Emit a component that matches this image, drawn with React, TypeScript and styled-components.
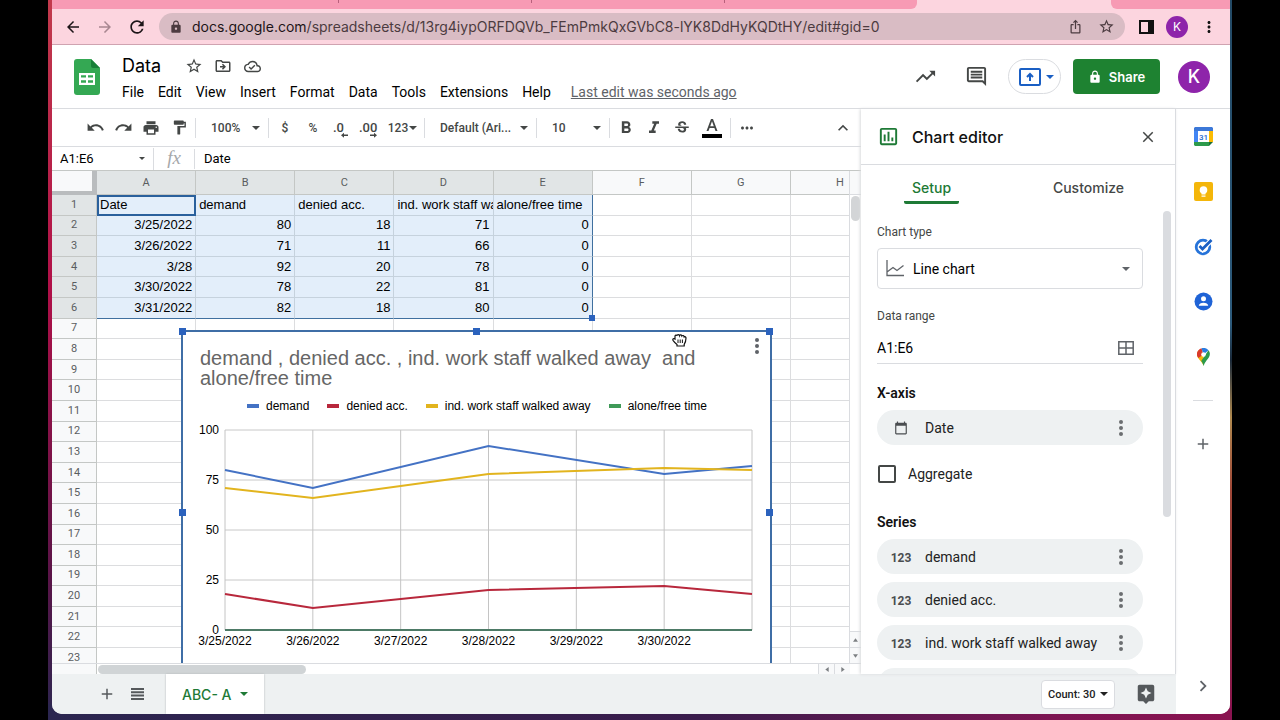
import React from 'react';
import styled, { createGlobalStyle, css } from 'styled-components';
import {
  MdArrowBack, MdArrowForward, MdAssistant, MdAdd, MdCalendarToday, MdChevronRight, MdClose,
  MdExpandLess, MdFormatBold, MdFormatItalic, MdFormatPaint, MdIosShare, MdLock, MdMoreHoriz, MdMoreVert,
  MdOutlineAssessment, MdOutlineCloudDone, MdOutlineComment, MdOutlineDriveFileMove,
  MdPrint, MdRedo, MdRefresh, MdStarBorder, MdStrikethroughS, MdTrendingUp, MdUndo,
} from 'react-icons/md';

const ui = "Roboto, 'Liberation Sans', sans-serif";
const display = "Inter, Roboto, sans-serif";
const sheetFont = "'Liberation Sans', Arial, sans-serif";
const line = '#dadce0';
const ink = '#444746';

const GlobalStyle = createGlobalStyle`
  * { box-sizing: border-box; }
  body { margin: 0; background: #000; font-family: ${ui}; color: #111; }
  button, input, select { font: inherit; color: inherit; margin: 0; padding: 0; border: 0; background: none; }
  button { cursor: pointer; }
  svg { display: block; flex: none; }
`;

/* ---------- frame ---------- */
const Stage = styled.div`
  height: 100vh;
  padding: 0 48px;
  background: #000;
`;
const Desktop = styled.div`
  height: 100%;
  padding: 0 2px 6px 4px;
  background:
    linear-gradient(90deg, #2b2650 0%, #3a1c4c 55%, #7d1552 85%, #8a1350 100%) bottom / 100% 16px no-repeat,
    linear-gradient(180deg, #234a66 0%, #2d5b7c 45%, #1b2a3a 50%, #b08a50 58%, #a04838 68%, #8c2a3c 85%, #8a1350 100%) right / 6px 100% no-repeat,
    linear-gradient(180deg, #c23a4c 0%, #b01048 40%, #5a1448 80%, #2b2650 100%);
`;
const Window = styled.div`
  display: flex;
  flex-direction: column;
  height: 100%;
  overflow: hidden;
  background: #fff;
  border-radius: 0 0 10px 10px;
`;

/* ---------- browser chrome ---------- */
const TabStrip = styled.div`
  display: flex;
  flex: none;
  height: 9px;
  background: #fcd5df;
`;
const InactiveTabs = styled.div<{ $trailing?: boolean }>`
  flex: ${p => (p.$trailing ? '0 0 119px' : '1')};
  display: flex;
  justify-content: flex-end;
  gap: 192px;
  padding-right: ${p => (p.$trailing ? 0 : 192)}px;
  background: #f79ab4;
  border-radius: ${p => (p.$trailing ? '0 0 0 6px' : '0 0 6px 0')};
`;
const TabDivider = styled.i`
  width: 1px;
  height: 3px;
  background: #b8607c;
`;
const ActiveTab = styled.div`
  width: 194px;
`;
const AddressRow = styled.div`
  display: flex;
  align-items: center;
  flex: none;
  height: 36px;
  padding: 0 12px 0 11px;
  background: #fcd5df;
  border-bottom: 1px solid #cfa3b0;
`;
const NavButton = styled.button<{ $dim?: boolean }>`
  display: grid;
  place-items: center;
  width: 20px;
  height: 24px;
  margin-right: 12px;
  color: ${p => (p.$dim ? '#a88791' : '#1d1518')};
`;
const UrlPill = styled.div`
  display: flex;
  align-items: center;
  flex: 1;
  min-width: 0;
  height: 27px;
  padding: 0 11px 0 10px;
  gap: 9px;
  border-radius: 14px;
  background: #d9bcc4;
  color: #4c3b40;
`;
const Url = styled.div`
  flex: 1;
  min-width: 0;
  overflow: hidden;
  white-space: nowrap;
  font: 14px/20px ${display};
  color: #4c3b40;
  b { font-weight: 400; color: #1d1518; }
`;
const PillButton = styled.button`
  display: grid;
  place-items: center;
  width: 16px;
  height: 20px;
  margin-left: 6px;
`;
const BrowserTools = styled.div`
  display: flex;
  align-items: center;
  gap: 12px;
  margin-left: 14px;
`;
const Avatar = styled.button<{ $size: number }>`
  flex: none;
  width: ${p => p.$size}px;
  height: ${p => p.$size}px;
  border-radius: 50%;
  background: #8e24aa;
  color: #fff;
  font: ${p => (p.$size > 24 ? '500 18px' : '12px')} ${display};
`;

/* ---------- document header ---------- */
const DocHeader = styled.header`
  display: flex;
  align-items: center;
  flex: none;
  height: 64px;
  padding: 0 20px 0 22px;
  border-bottom: 1px solid ${line};
`;
const TitleBlock = styled.div`
  flex: 1;
  min-width: 0;
  margin-left: 22px;
  padding-top: 5px;
`;
const TitleRow = styled.div`
  display: flex;
  align-items: center;
  height: 26px;
  color: ${ink};
`;
const DocTitle = styled.h1`
  margin: 0 24px 0 0;
  font: 18px/26px ${display};
  color: #000;
`;
const TitleIcon = styled.button`
  display: grid;
  place-items: center;
  width: 18px;
  height: 20px;
  margin-right: 11px;
`;
const MenuRow = styled.nav`
  display: flex;
  align-items: center;
  gap: 14px;
  height: 26px;
  font-size: 14px;
  line-height: 20px;
  white-space: nowrap;
  color: #000;
`;
const EditLink = styled.a`
  margin-left: 6px;
  color: #5f6368;
`;
const HeaderIcon = styled.button<{ $gap: number }>`
  color: ${ink};
  margin-right: ${p => p.$gap}px;
`;
const PresentButton = styled.button`
  display: flex;
  align-items: center;
  justify-content: center;
  gap: 5px;
  width: 53px;
  height: 35px;
  margin-right: 12px;
  padding-left: 4px;
  border: 1px solid ${line};
  border-radius: 18px;
  color: #1a5fc4;
`;
const ShareButton = styled.button`
  display: flex;
  align-items: center;
  justify-content: center;
  gap: 7px;
  width: 87px;
  height: 35px;
  margin-right: 18px;
  border-radius: 4px;
  background: #1e8231;
  color: #fff;
  font: 600 13px ${display};
`;

/* ---------- workspace ---------- */
const Workspace = styled.div`
  display: flex;
  flex: 1;
  min-height: 0;
`;
const Main = styled.div`
  display: flex;
  flex-direction: column;
  flex: 1;
  min-width: 0;
`;
const Upper = styled.div`
  display: flex;
  flex: 1;
  min-height: 0;
`;
const SheetPane = styled.section`
  display: flex;
  flex-direction: column;
  flex: 1;
  min-width: 0;
`;
const Toolbar = styled.div`
  display: flex;
  align-items: center;
  flex: none;
  height: 38px;
  padding: 0 4px 0 29px;
  border-bottom: 1px solid ${line};
  color: ${ink};
  font-size: 12px;
  font-weight: 500;
`;
const ToolButton = styled.button<{ $w?: number; $end?: boolean }>`
  display: flex;
  align-items: center;
  justify-content: center;
  gap: 1px;
  width: ${p => p.$w ?? 28}px;
  height: 28px;
  ${p => p.$end && css`margin-left: auto;`}
`;
const ToolDivider = styled.i`
  flex: none;
  width: 1px;
  height: 20px;
  margin: 0 2px;
  background: ${line};
`;
const ToolSelect = styled.label<{ $w: number }>`
  display: flex;
  align-items: center;
  width: ${p => p.$w}px;
  padding: 0 6px 0 13px;
`;
const Select = styled.select`
  flex: 1;
  min-width: 0;
  appearance: none;
  outline: 0;
`;
const FormulaRow = styled.div`
  display: flex;
  align-items: center;
  flex: none;
  height: 24px;
  border-bottom: 1px solid #c4c7c5;
`;
const NameBox = styled.label`
  display: flex;
  align-items: center;
  width: 102px;
  height: 22px;
  padding: 0 8px;
  border-right: 1px solid ${line};
  color: ${ink};
`;
const TextInput = styled.input<{ $size?: number }>`
  flex: 1;
  min-width: 0;
  width: 40px;
  outline: 0;
  color: #000;
  font-size: ${p => p.$size ?? 13}px;
`;
const FxMark = styled.span`
  width: 41px;
  height: 20px;
  border-right: 1px solid ${line};
  text-align: center;
  font: italic 19px/18px 'Liberation Serif', serif;
  color: #a6a8aa;
`;
const FormulaField = styled.label`
  display: flex;
  flex: 1;
  padding: 0 9px;
`;

/* ---------- grid ---------- */
const GridRow = styled.div`
  display: flex;
  flex: 1;
  min-height: 0;
`;
const GridView = styled.div`
  position: relative;
  flex: 1;
  min-width: 0;
  overflow: hidden;
`;
const Grid = styled.table`
  width: 838px;
  height: 498px;
  table-layout: fixed;
  border-collapse: separate;
  border-spacing: 0;
  font: 13px/18px ${sheetFont};
`;
const HeadCol = styled.col`
  width: 45px;
`;
const HeadRow = styled.tr`
  height: 24px;
`;
const Corner = styled.td`
  padding: 0;
  border: solid #b9bcbe;
  border-width: 0 5px 4px 0;
  background: #f8f9fa;
`;
const HeadCell = styled.th<{ $on?: boolean }>`
  padding: 0;
  border-right: 1px solid #c4c7c5;
  border-bottom: 1px solid #c4c7c5;
  background: ${p => (p.$on ? '#e1e5e6' : '#f8f9fa')};
  color: #5a5d60;
  font: 11px/18px ${ui};
`;
const Cell = styled.td<{ $on?: boolean; $left?: boolean; $edgeR?: boolean; $edgeB?: boolean; $active?: boolean }>`
  position: relative;
  padding: 0 3px;
  overflow: hidden;
  white-space: nowrap;
  text-align: ${p => (p.$left ? 'left' : 'right')};
  color: #000;
  background: ${p => (p.$on ? '#e3eefa' : '#fff')};
  border-right: 1px solid ${p => (p.$edgeR ? '#40709f' : p.$on ? '#c6d2dd' : '#dcdddf')};
  border-bottom: 1px solid ${p => (p.$edgeB ? '#40709f' : p.$on ? '#c6d2dd' : '#dcdddf')};
  ${p => p.$active && css`outline: 2px solid #2a609c; outline-offset: -2px;`}
  ${p => p.$edgeR && p.$edgeB && css`overflow: visible; z-index: 1;`}
`;
const FillHandle = styled.i`
  position: absolute;
  right: -3px;
  bottom: -3px;
  width: 6px;
  height: 6px;
  background: #2b62bd;
`;
const VScroll = styled.div`
  display: flex;
  flex-direction: column;
  flex: none;
  width: 12px;
  border-left: 1px solid ${line};
  background: #fff;
`;
const VHead = styled.div`
  height: 24px;
  border-bottom: 1px solid ${line};
  background: #f8f9fa;
`;
const VThumb = styled.div`
  height: 25px;
  margin: 1px 1px auto;
  border-radius: 5px;
  background: #d3d5d7;
`;
const ScrollStep = styled.button<{ $wide?: boolean }>`
  display: grid;
  place-items: center;
  flex: none;
  width: ${p => (p.$wide ? '16px' : '100%')};
  height: ${p => (p.$wide ? '100%' : '16px')};
  border: solid ${line};
  border-width: ${p => (p.$wide ? '0 0 0 1px' : '1px 0 0')};
  background: #f8f9fa;
  color: #7c7f82;
`;
const HScroll = styled.div`
  display: flex;
  flex: none;
  height: 11px;
  padding-right: 11px;
  border-top: 1px solid ${line};
`;
const HHead = styled.div`
  width: 45px;
  border-right: 1px solid #c4c7c5;
  background: #f8f9fa;
`;
const HThumb = styled.div`
  width: 208px;
  margin: 1px auto 0 1px;
  border-radius: 5px;
  background: #d0d4d6;
`;

/* ---------- floating chart ---------- */
const ChartBox = styled.figure`
  position: absolute;
  left: 129px;
  top: 159px;
  width: 591px;
  height: 366px;
  margin: 0;
  padding: 16px 17px 0;
  border: 2px solid #3f6ea6;
  background: #fff;
  font-family: ${sheetFont};
`;
const ChartTitle = styled.figcaption`
  width: 500px;
  white-space: pre-line;
  font-size: 20px;
  line-height: 20px;
  color: #666;
`;
const Legend = styled.ul`
  display: flex;
  gap: 18px;
  margin: 10px 0 0;
  padding: 0 0 0 47px;
  list-style: none;
  white-space: nowrap;
  font-size: 12px;
  line-height: 16px;
  color: #000;
`;
const LegendItem = styled.li<{ $color: string }>`
  display: flex;
  align-items: center;
  gap: 7px;
  &::before {
    content: '';
    width: 12px;
    height: 4px;
    background: ${p => p.$color};
  }
`;
const Plot = styled.svg`
  margin-left: -17px;
  font: 12px ${sheetFont};
  fill: #000;
`;
const ChartMenu = styled.button`
  position: absolute;
  right: 3px;
  top: 4px;
  color: #5f6368;
`;
const Handle = styled.i<{ $x: string; $y: string }>`
  position: absolute;
  left: ${p => p.$x};
  top: ${p => p.$y};
  width: 7px;
  height: 7px;
  margin: -4px;
  background: #2b62bd;
`;
const GrabCursor = styled.svg`
  position: absolute;
  left: 620px;
  top: 162px;
`;

/* ---------- sheet tabs ---------- */
const BottomBar = styled.footer`
  display: flex;
  align-items: center;
  flex: none;
  height: 40px;
  padding: 0 19px 0 45px;
  background: #eef1f2;
  color: #55595c;
`;
const BarButton = styled.button`
  display: grid;
  place-items: center;
  width: 20px;
  height: 28px;
  margin-right: 10px;
`;
const SheetTab = styled.button`
  display: flex;
  align-items: center;
  justify-content: center;
  gap: 8px;
  height: 40px;
  margin: 0 auto 0 9px;
  padding: 0 16px;
  background: #fff;
  box-shadow: 0 0 2px #b4b8ba;
  color: #1e7a36;
  font: 500 14px ${display};
`;
const CountSelect = styled.label`
  display: flex;
  align-items: center;
  width: 74px;
  height: 29px;
  margin-right: 20px;
  padding: 0 6px;
  border: 1px solid ${line};
  border-radius: 4px;
  background: #fff;
  color: #222;
  font-size: 11px;
  font-weight: 500;
`;

/* ---------- chart editor ---------- */
const Editor = styled.aside`
  display: flex;
  flex-direction: column;
  flex: none;
  width: 315px;
  background: #fff;
  border-right: 1px solid ${line};
  box-shadow: -1px 0 3px #d8dadc;
  z-index: 2;
`;
const EditorHead = styled.div`
  display: flex;
  align-items: center;
  flex: none;
  height: 56px;
  padding: 0 18px 0 16px;
  border-bottom: 1px solid ${line};
  color: #1e7a36;
`;
const EditorTitle = styled.h2`
  flex: 1;
  margin: 0 0 0 12px;
  font: 500 16px/24px ${display};
  color: #111;
`;
const CloseButton = styled.button`
  color: ${ink};
`;
const TabRow = styled.div`
  display: flex;
  justify-content: space-between;
  flex: none;
  height: 46px;
  padding: 0 43px;
`;
const EditorTab = styled.button<{ $on?: boolean }>`
  height: 39px;
  padding: 9px 8px 0;
  border-bottom: 3px solid ${p => (p.$on ? '#1e7a36' : 'transparent')};
  border-radius: 0 0 2px 2px;
  color: ${p => (p.$on ? '#1e7a36' : ink)};
  font: 500 14px ${display};
`;
const EditorBody = styled.div`
  display: flex;
  justify-content: space-between;
  flex: 1;
  min-height: 0;
  overflow: hidden;
  padding: 0 4px 0 16px;
`;
const Form = styled.div`
  flex: 1;
  margin-right: 20px;
  padding-top: 13px;
`;
const EditorThumb = styled.div`
  width: 8px;
  height: 306px;
  border-radius: 4px;
  background: #dadce0;
`;
const FieldLabel = styled.label`
  display: block;
  font-size: 12px;
  line-height: 16px;
  color: ${ink};
`;
const TypeBox = styled.div`
  display: flex;
  align-items: center;
  gap: 9px;
  height: 41px;
  margin: 8px 0 19px;
  padding: 0 12px 0 8px;
  border: 1px solid ${line};
  border-radius: 4px;
  font-size: 14px;
  color: #5f6368;
  select { color: #000; }
`;
const RangeBox = styled.div`
  display: flex;
  align-items: center;
  height: 32px;
  margin: 8px 0 19px;
  padding-right: 9px;
  border-bottom: 1px solid ${line};
  color: #5f6368;
`;
const SectionTitle = styled.h3`
  margin: 0 0 7px;
  font: 600 14px/20px ${ui};
  color: #111;
`;
const Chip = styled.div`
  display: flex;
  align-items: center;
  height: 35px;
  margin-bottom: 8px;
  padding: 0 12px;
  border-radius: 18px;
  background: #eef1f2;
  color: #6b6e71;
  font-size: 14px;
`;
const ChipIcon = styled.span`
  display: grid;
  place-items: center;
  width: 24px;
  color: #4a4d50;
`;
const NumberMark = styled.b`
  padding-top: 2px;
  font: 700 12px/16px ${ui};
`;
const ChipText = styled.span`
  flex: 1;
  margin-left: 12px;
  white-space: nowrap;
  color: #222;
`;
const CheckLabel = styled.label`
  display: flex;
  align-items: center;
  gap: 12px;
  height: 20px;
  margin: 19px 0 28px;
  padding-left: 1px;
  font-size: 14px;
  color: #222;
`;
const CheckBox = styled.input`
  appearance: none;
  width: 18px;
  height: 18px;
  border: 2px solid ${ink};
  border-radius: 2px;
`;

/* ---------- app rail ---------- */
const Rail = styled.nav`
  display: flex;
  flex-direction: column;
  align-items: center;
  flex: none;
  width: 54px;
  padding-bottom: 17px;
  background: #fff;
  color: #5f6368;
`;
const RailButton = styled.button`
  display: grid;
  place-items: center;
  width: 40px;
  height: 55px;
`;
const RailRule = styled.i`
  width: 20px;
  height: 1px;
  margin: 16px 0 15px;
  background: ${line};
`;
const Spacer = styled.div`
  flex: 1;
`;

/* ---------- drawings ---------- */
const Caret = ({ w = 8 }: { w?: number }) => (
  <svg width={w} height={w / 2} viewBox="0 0 8 4" fill="currentColor" aria-hidden><path d="M0 0h8L4 4z" /></svg>
);
const Dots = () => (
  <svg width="20" height="20" viewBox="0 0 20 20" fill="currentColor" aria-hidden>
    <circle cx="10" cy="4" r="2" /><circle cx="10" cy="10" r="2" /><circle cx="10" cy="16" r="2" />
  </svg>
);
const SheetsLogo = () => (
  <svg width="26" height="36" viewBox="0 0 26 36" aria-hidden>
    <path d="M3 0h14l9 9v24a3 3 0 0 1-3 3H3a3 3 0 0 1-3-3V3a3 3 0 0 1 3-3z" fill="#34a853" />
    <path d="M17 0l9 9h-7a2 2 0 0 1-2-2z" fill="#188038" />
    <path fillRule="evenodd" fill="#fff" d="M5 14h16v12H5zM7 16.200v2.400h5v-2.400zM14 16.200v2.400h5v-2.400zM7 21.200v2.600h5v-2.600zM14 21.200v2.600h5v-2.600z" />
  </svg>
);
const AllSheetsIcon = () => (
  <svg width="13" height="12" viewBox="0 0 13 12" fill="currentColor" aria-hidden>
    <path d="M0 0h13v2H0zM0 3.300h13v2H0zM0 6.600h13v2H0zM0 10h13v2H0z" />
  </svg>
);
const DecimalIcon = ({ more }: { more?: boolean }) => (
  <svg width="20" height="20" viewBox="0 0 20 20" aria-hidden fill="currentColor">
    <text x={more ? 0 : 2} y="14" fontSize="13" fontFamily="Roboto" fontWeight="500">{more ? '.00' : '.0'}</text>
    {more
      ? <path d="M11 16.500h4v-1.700l3 2.500-3 2.500V18h-4z" />
      : <path d="M17 16.500h-4v-1.700l-3 2.500 3 2.500V18h4z" />}
  </svg>
);
const TextColorIcon = () => (
  <svg width="22" height="22" viewBox="0 0 22 22" aria-hidden>
    <path d="M10 2h2l4.500 12h-2l-1.100-3.100H8.600L7.500 14h-2zM9.200 9.200h3.600L11 4.200z" fill={ink} />
    <path d="M1 17h20v4H1z" fill="#000" />
  </svg>
);
const LineChartIcon = () => (
  <svg width="18" height="17" viewBox="0 0 18 17" fill="none" stroke="currentColor" strokeWidth="1.300" aria-hidden>
    <path d="M1 0v15.500h17M1 12l6-4.500 4 3 6.500-5" />
  </svg>
);
const CalendarLogo = () => (
  <svg width="19" height="19" viewBox="0 0 19 19" aria-hidden>
    <path d="M1 0h17l1 1v3H0V1z" fill="#3c78d8" /><path d="M0 4h4v11H0z" fill="#4285f4" />
    <path d="M15 4h4v11h-4z" fill="#fbbc04" /><path d="M0 15h15v4H1l-1-1z" fill="#2c9a4b" />
    <path d="M15 15h4l-4 4z" fill="#1c6e3a" /><path d="M4 4h11v11H4z" fill="#fff" />
    <text x="9.500" y="12.500" fontSize="8" textAnchor="middle" fontFamily="Roboto" fontWeight="500" fill="#1a66d0">31</text>
  </svg>
);
const KeepLogo = () => (
  <svg width="19" height="19" viewBox="0 0 19 19" aria-hidden>
    <rect width="19" height="19" rx="2" fill="#f4b60a" />
    <circle cx="9.500" cy="8" r="3.800" fill="#fff" /><path d="M7.500 10h4v2.500h-4zM7.500 13.500h4v1.300h-4z" fill="#fff" />
  </svg>
);
const TasksLogo = () => (
  <svg width="19" height="19" viewBox="0 0 19 19" fill="none" aria-hidden>
    <circle cx="9" cy="10" r="6.800" stroke="#2673d9" strokeWidth="2.800" />
    <path d="M5.500 9.500l3 3L17.500 3" stroke="#fff" strokeWidth="5" />
    <path d="M5.500 9l3 3L17.500 3" stroke="#1a5fc4" strokeWidth="2.800" />
  </svg>
);
const ContactsLogo = () => (
  <svg width="19" height="19" viewBox="0 0 19 19" aria-hidden>
    <circle cx="9.500" cy="9.500" r="9" fill="#1f63d6" />
    <circle cx="9.500" cy="6.800" r="2.500" fill="#fff" /><path d="M4.800 13.800c0-4.200 9.400-4.200 9.400 0z" fill="#fff" />
  </svg>
);
const MapsLogo = () => (
  <svg width="13" height="18" viewBox="0 0 13 18" aria-hidden>
    <path d="M6.500 18C6 14 0 11 0 6.500c0-1.600.6-3.100 1.500-4.200L6.500 6.500z" fill="#f4b60a" />
    <path d="M1.500 2.300A6.500 6.500 0 0 1 4.500.3L6.500 6.500 1.400 10A6 6 0 0 1 1.500 2.300z" fill="#d93a2c" />
    <path d="M4.500.3A6.500 6.500 0 0 1 11.500 2.300L6.500 6.500z" fill="#2b7de0" />
    <path d="M11.500 2.300c3 4 .5 7.200-2 10.200-1.400 1.700-2.400 3.500-3 5.500-.4-2-1.200-3.400-2.300-4.900z" fill="#2c9a4b" />
    <circle cx="6.500" cy="6.500" r="2.300" fill="#fff" />
  </svg>
);

/* ---------- data ---------- */
const columns = ['A', 'B', 'C', 'D', 'E', 'F', 'G', 'H'];
const data = [
  ['Date', 'demand', 'denied acc.', 'ind. work staff walked away', 'alone/free time'],
  ['3/25/2022', '80', '18', '71', '0'],
  ['3/26/2022', '71', '11', '66', '0'],
  ['3/28', '92', '20', '78', '0'],
  ['3/30/2022', '78', '22', '81', '0'],
  ['3/31/2022', '82', '18', '80', '0'],
];
const days = [0, 1, 3, 5, 6];
const series = [
  { name: 'demand', color: '#4472c4', values: [80, 71, 92, 78, 82] },
  { name: 'denied acc.', color: '#b8283c', values: [18, 11, 20, 22, 18] },
  { name: 'ind. work staff walked away', color: '#e2b41e', values: [71, 66, 78, 81, 80] },
  { name: 'alone/free time', color: '#3f9a58', values: [0, 0, 0, 0, 0] },
];
const dayX = (d: number) => 42 + (d * 527) / 6;
const valueY = (v: number) => 216 - v * 2;

const SheetGrid = () => (
  <Grid>
    <colgroup><HeadCol />{columns.map(c => <col key={c} />)}</colgroup>
    <thead>
      <HeadRow>
        <Corner />
        {columns.map((c, i) => <HeadCell key={c} scope="col" $on={i < 5}>{c}</HeadCell>)}
      </HeadRow>
    </thead>
    <tbody>
      {Array.from({ length: 23 }, (_, r) => (
        <tr key={r}>
          <HeadCell scope="row" $on={r < 6}>{r + 1}</HeadCell>
          {columns.map((c, i) => {
            const on = r < 6 && i < 5;
            const corner = r === 5 && i === 4;
            return (
              <Cell key={c} $on={on} $left={r === 0} $edgeR={on && i === 4} $edgeB={on && r === 5} $active={r === 0 && i === 0}>
                {data[r]?.[i]}{corner && <FillHandle />}
              </Cell>
            );
          })}
        </tr>
      ))}
    </tbody>
  </Grid>
);

const Chart = () => (
  <ChartBox>
    <ChartTitle>{'demand , denied acc. , ind. work staff walked away \u00a0and alone/free time'}</ChartTitle>
    <Legend>{series.map(s => <LegendItem key={s.name} $color={s.color}>{s.name}</LegendItem>)}</Legend>
    <Plot width="587" height="240" viewBox="0 0 587 240" role="img" aria-label="Line chart of the four series by date">
      {[0, 25, 50, 75, 100].map(v => (
        <g key={v}>
          <path d={`M42 ${valueY(v)}H569`} stroke="#c8c8c8" />
          <text x="36" y={valueY(v) + 4} textAnchor="end">{v}</text>
        </g>
      ))}
      {[0, 1, 2, 3, 4, 5, 6].map(d => (
        <g key={d}>
          <path d={`M${dayX(d)} 16V216`} stroke="#c4c4c4" />
          {d < 6 && <text x={dayX(d)} y="231" textAnchor="middle">{`3/${25 + d}/2022`}</text>}
        </g>
      ))}
      <path d="M42 216H569" stroke="#4d7a66" strokeWidth="2" />
      {series.slice(0, 3).map(s => (
        <polyline key={s.name} fill="none" stroke={s.color} strokeWidth="2"
          points={s.values.map((v, i) => `${dayX(days[i])},${valueY(v)}`).join(' ')} />
      ))}
    </Plot>
    <ChartMenu aria-label="Chart menu"><Dots /></ChartMenu>
    {[['0%', '0%'], ['50%', '0%'], ['100%', '0%'], ['0%', '50%'], ['100%', '50%']].map(([x, y]) => <Handle key={x + y} $x={x} $y={y} />)}
  </ChartBox>
);

export default function App() {
  return (
    <Stage>
      <GlobalStyle />
      <Desktop>
        <Window>
          <TabStrip>
            <InactiveTabs><TabDivider /><TabDivider /><TabDivider /></InactiveTabs>
            <ActiveTab />
            <InactiveTabs $trailing />
          </TabStrip>
          <AddressRow>
            <NavButton aria-label="Back"><MdArrowBack size={18} /></NavButton>
            <NavButton aria-label="Forward" $dim><MdArrowForward size={18} /></NavButton>
            <NavButton aria-label="Reload"><MdRefresh size={20} /></NavButton>
            <UrlPill>
              <MdLock size={14} />
              <Url><b>docs.google.com</b>/spreadsheets/d/13rg4iypORFDQVb_FEmPmkQxGVbC8-lYK8DdHyKQDtHY/edit#gid=0</Url>
              <PillButton aria-label="Share page"><MdIosShare size={15} /></PillButton>
              <PillButton aria-label="Bookmark"><MdStarBorder size={17} /></PillButton>
            </UrlPill>
            <BrowserTools>
              <svg width="15" height="14" viewBox="0 0 15 14" aria-hidden>
                <path fillRule="evenodd" d="M0 0h15v14H0zM2 2v10h7V2z" fill="#111" />
              </svg>
              <Avatar $size={22}>K</Avatar>
              <MdMoreVert size={18} />
            </BrowserTools>
          </AddressRow>

          <DocHeader>
            <SheetsLogo />
            <TitleBlock>
              <TitleRow>
                <DocTitle>Data</DocTitle>
                <TitleIcon aria-label="Star"><MdStarBorder size={18} /></TitleIcon>
                <TitleIcon aria-label="Move"><MdOutlineDriveFileMove size={18} /></TitleIcon>
                <TitleIcon aria-label="Saved to cloud"><MdOutlineCloudDone size={17} /></TitleIcon>
              </TitleRow>
              <MenuRow>
                {['File', 'Edit', 'View', 'Insert', 'Format', 'Data', 'Tools', 'Extensions', 'Help'].map(m => (
                  <button key={m}>{m}</button>
                ))}
                <EditLink href="#history">Last edit was seconds ago</EditLink>
              </MenuRow>
            </TitleBlock>
            <HeaderIcon $gap={28} aria-label="Activity"><MdTrendingUp size={23} /></HeaderIcon>
            <HeaderIcon $gap={20} aria-label="Comments"><MdOutlineComment size={23} /></HeaderIcon>
            <PresentButton aria-label="Present">
              <svg width="22" height="18" viewBox="0 0 22 18" fill="none" stroke="currentColor" strokeWidth="2" aria-hidden>
                <rect x="1" y="1" width="20" height="16" rx="1" /><path d="M11 13V6M8 9l3-3 3 3" />
              </svg>
              <Caret />
            </PresentButton>
            <ShareButton><MdLock size={14} />Share</ShareButton>
            <Avatar $size={32}>K</Avatar>
          </DocHeader>

          <Workspace>
            <Main>
              <Upper>
                <SheetPane>
                  <Toolbar>
                    <ToolButton aria-label="Undo"><MdUndo size={19} /></ToolButton>
                    <ToolButton aria-label="Redo"><MdRedo size={19} /></ToolButton>
                    <ToolButton aria-label="Print"><MdPrint size={18} /></ToolButton>
                    <ToolButton aria-label="Paint format"><MdFormatPaint size={17} /></ToolButton>
                    <ToolDivider />
                    <ToolSelect $w={68}><Select aria-label="Zoom"><option>100%</option></Select><Caret /></ToolSelect>
                    <ToolDivider />
                    <ToolButton>$</ToolButton>
                    <ToolButton>%</ToolButton>
                    <ToolButton aria-label="Fewer decimals"><DecimalIcon /></ToolButton>
                    <ToolButton aria-label="More decimals"><DecimalIcon more /></ToolButton>
                    <ToolButton $w={39}>123<Caret /></ToolButton>
                    <ToolDivider />
                    <ToolSelect $w={107}><Select aria-label="Font"><option>Default (Ari...</option></Select><Caret /></ToolSelect>
                    <ToolDivider />
                    <ToolSelect $w={68}><Select aria-label="Font size"><option>10</option></Select><Caret /></ToolSelect>
                    <ToolDivider />
                    <ToolButton aria-label="Bold"><MdFormatBold size={20} /></ToolButton>
                    <ToolButton aria-label="Italic"><MdFormatItalic size={20} /></ToolButton>
                    <ToolButton aria-label="Strikethrough"><MdStrikethroughS size={18} /></ToolButton>
                    <ToolButton $w={32} aria-label="Text color"><TextColorIcon /></ToolButton>
                    <ToolDivider />
                    <ToolButton aria-label="More"><MdMoreHoriz size={18} /></ToolButton>
                    <ToolButton $end aria-label="Hide menus"><MdExpandLess size={20} /></ToolButton>
                  </Toolbar>
                  <FormulaRow>
                    <NameBox><TextInput aria-label="Name box" defaultValue="A1:E6" /><Caret w={6} /></NameBox>
                    <FxMark>fx</FxMark>
                    <FormulaField><TextInput aria-label="Formula" defaultValue="Date" /></FormulaField>
                  </FormulaRow>
                  <GridRow>
                    <GridView>
                      <SheetGrid />
                      <Chart />
                      <GrabCursor width="15" height="14" viewBox="0 0 15 14" aria-hidden>
                        <path d="M3 5.500V3.200c0-1.300 1.700-1.500 2-.4.200-1.600 2.200-1.600 2.500-.2.400-1.200 2.200-1 2.400.4.700-.9 2.300-.5 2.300.9.800-.5 1.800 0 1.800 1.200 0 3-.5 4.300-1.800 6.200V13H5v-1.500C3.500 10.200 2 8.700 1 7.300.4 6 1.800 5 3 6z" fill="#fff" stroke="#111" strokeWidth="1.200" />
                        <path d="M6 6.500v3.500M8.200 6.500v3.500M10.400 6.500v3.500" stroke="#111" />
                      </GrabCursor>
                    </GridView>
                    <VScroll>
                      <VHead />
                      <VThumb />
                      <ScrollStep aria-label="Scroll up"><svg width="5" height="4" viewBox="0 0 6 4" fill="currentColor"><path d="M3 0l3 4H0z" /></svg></ScrollStep>
                      <ScrollStep aria-label="Scroll down"><svg width="5" height="4" viewBox="0 0 6 4" fill="currentColor"><path d="M0 0h6L3 4z" /></svg></ScrollStep>
                    </VScroll>
                  </GridRow>
                  <HScroll>
                    <HHead />
                    <HThumb />
                    <ScrollStep $wide aria-label="Scroll left"><svg width="4" height="5" viewBox="0 0 4 6" fill="currentColor"><path d="M4 0v6L0 3z" /></svg></ScrollStep>
                    <ScrollStep $wide aria-label="Scroll right"><svg width="4" height="5" viewBox="0 0 4 6" fill="currentColor"><path d="M0 0l4 3-4 3z" /></svg></ScrollStep>
                  </HScroll>
                </SheetPane>

                <Editor>
                  <EditorHead>
                    <MdOutlineAssessment size={23} />
                    <EditorTitle>Chart editor</EditorTitle>
                    <CloseButton aria-label="Close"><MdClose size={18} /></CloseButton>
                  </EditorHead>
                  <TabRow role="tablist">
                    <EditorTab role="tab" $on>Setup</EditorTab>
                    <EditorTab role="tab">Customize</EditorTab>
                  </TabRow>
                  <EditorBody>
                    <Form>
                      <FieldLabel htmlFor="chart-type">Chart type</FieldLabel>
                      <TypeBox>
                        <LineChartIcon />
                        <Select id="chart-type"><option>Line chart</option></Select>
                        <Caret />
                      </TypeBox>
                      <FieldLabel htmlFor="data-range">Data range</FieldLabel>
                      <RangeBox>
                        <TextInput id="data-range" $size={14} defaultValue="A1:E6" />
                        <svg width="16" height="14" viewBox="0 0 16 14" fill="none" stroke="currentColor" strokeWidth="1.500" aria-hidden>
                          <path d="M.8.8h14.400v12.400H.8zM8 .8v12.400M.8 7h14.400" />
                        </svg>
                      </RangeBox>
                      <SectionTitle>X-axis</SectionTitle>
                      <Chip>
                        <ChipIcon><MdCalendarToday size={14} /></ChipIcon>
                        <ChipText>Date</ChipText>
                        <button aria-label="Options for Date"><Dots /></button>
                      </Chip>
                      <CheckLabel><CheckBox type="checkbox" />Aggregate</CheckLabel>
                      <SectionTitle>Series</SectionTitle>
                      {series.map(s => (
                        <Chip key={s.name}>
                          <ChipIcon><NumberMark>123</NumberMark></ChipIcon>
                          <ChipText>{s.name}</ChipText>
                          <button aria-label={`Options for ${s.name}`}><Dots /></button>
                        </Chip>
                      ))}
                    </Form>
                    <EditorThumb />
                  </EditorBody>
                </Editor>
              </Upper>

              <BottomBar>
                <BarButton aria-label="Add sheet"><MdAdd size={18} /></BarButton>
                <BarButton aria-label="All sheets"><AllSheetsIcon /></BarButton>
                <SheetTab>ABC- A<Caret /></SheetTab>
                <CountSelect><Select aria-label="Summary"><option>Count: 30</option></Select><Caret /></CountSelect>
                <button aria-label="Explore"><MdAssistant size={22} /></button>
              </BottomBar>
            </Main>

            <Rail>
              <RailButton aria-label="Calendar"><CalendarLogo /></RailButton>
              <RailButton aria-label="Keep"><KeepLogo /></RailButton>
              <RailButton aria-label="Tasks"><TasksLogo /></RailButton>
              <RailButton aria-label="Contacts"><ContactsLogo /></RailButton>
              <RailButton aria-label="Maps"><MapsLogo /></RailButton>
              <RailRule />
              <RailButton aria-label="Get add-ons"><MdAdd size={18} /></RailButton>
              <Spacer />
              <button aria-label="Hide side panel"><MdChevronRight size={22} /></button>
            </Rail>
          </Workspace>
        </Window>
      </Desktop>
    </Stage>
  );
}
